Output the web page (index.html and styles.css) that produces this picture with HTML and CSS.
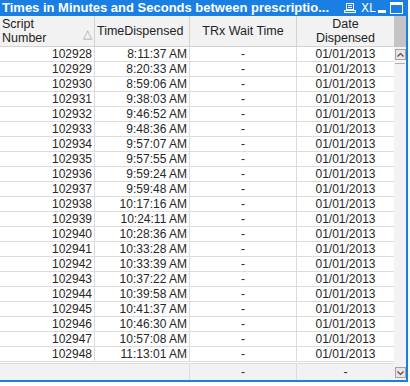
FILE: index.html
```html
<!DOCTYPE html>
<html>
<head>
<meta charset="utf-8">
<link rel="stylesheet" href="styles.css">
</head>
<body>
<div class="window">
  <div class="titlebar">
    <span class="title">Times in Minutes and Seconds between prescriptio...</span>
    <span class="tools">
      <svg class="ico print" width="12" height="12" viewBox="0 0 12 12"><rect x="2.5" y="1.5" width="7" height="6" fill="none" stroke="#fff"/><rect x="0.5" y="8.5" width="11" height="2" fill="none" stroke="#fff"/><line x1="4" y1="3.5" x2="8" y2="3.5" stroke="#fff"/><line x1="4" y1="5.5" x2="8" y2="5.5" stroke="#fff"/></svg>
      <span class="xl">XL</span>
      <svg class="ico min" width="10" height="12" viewBox="0 0 10 12"><rect x="1" y="8" width="8" height="3" fill="#fff"/></svg>
      <svg class="ico max" width="13" height="12" viewBox="0 0 13 12"><rect x="0.5" y="0.5" width="12" height="11" fill="none" stroke="#fff"/><rect x="1" y="1" width="11" height="2" fill="#fff"/></svg>
    </span>
  </div>
  <div class="body">
    <div class="table">
      <div class="head">
        <div class="hc c1"><span>Script<br>Number</span><span class="sort">&#9651;</span></div>
        <div class="hc c2">TimeDispensed</div>
        <div class="hc c3 center">TRx Wait Time</div>
        <div class="hc c4 center">Date<br>Dispensed</div>
      </div>
      <div class="rows" id="rows"></div>
      <div class="gap"></div>
      <div class="total">
        <div class="tc t12"></div>
        <div class="tc c3 center">-</div>
        <div class="tc c4 center">-</div>
      </div>
    </div>
    <div class="scroll">
      <div class="sc-head"></div>
      <div class="sc-track">
        <div class="btn"><svg width="9" height="8" viewBox="0 0 9 8"><polyline points="1.5,5.5 4.5,2.5 7.5,5.5" fill="none" stroke="#7a3a3a" stroke-width="1.2"/></svg></div>
        <div class="thumb"></div>
        <div class="fill"></div>
        <div class="btn"><svg width="9" height="8" viewBox="0 0 9 8"><polyline points="1.5,2.5 4.5,5.5 7.5,2.5" fill="none" stroke="#7a3a3a" stroke-width="1.2"/></svg></div>
      </div>
    </div>
  </div>
</div>
<script>
var data = [
["102928","8:11:37 AM"],["102929","8:20:33 AM"],["102930","8:59:06 AM"],["102931","9:38:03 AM"],
["102932","9:46:52 AM"],["102933","9:48:36 AM"],["102934","9:57:07 AM"],["102935","9:57:55 AM"],
["102936","9:59:24 AM"],["102937","9:59:48 AM"],["102938","10:17:16 AM"],["102939","10:24:11 AM"],
["102940","10:28:36 AM"],["102941","10:33:28 AM"],["102942","10:33:39 AM"],["102943","10:37:22 AM"],
["102944","10:39:58 AM"],["102945","10:41:37 AM"],["102946","10:46:30 AM"],["102947","10:57:08 AM"],
["102948","11:13:01 AM"]];
var html = "";
data.forEach(function(r){
  html += '<div class="row"><div class="c c1 right">'+r[0]+'</div><div class="c c2 right">'+r[1]+'</div><div class="c c3 center">-</div><div class="c c4 center">01/01/2013</div></div>';
});
document.getElementById("rows").innerHTML = html;
</script>
</body>
</html>
```
FILE: styles.css
```css
html, body { margin: 0; padding: 0; background: #fff; }
body { font-family: "Liberation Sans", Arial, sans-serif; font-size: 12px; color: #262626; }
.window {
  width: 406px;
  border-right: 2px solid #1a7fe3;
  border-bottom: 2px solid #1a7fe3;
}
.titlebar {
  height: 16px;
  background: #1a7fe3;
  color: #fff;
  display: flex;
  align-items: center;
}
.title { flex: 1; font-weight: bold; font-size: 13px; padding-left: 2px; white-space: nowrap; overflow: hidden; line-height: 16px; }
.tools { display: flex; align-items: center; padding-right: 3px; }
.print { margin-right: 5px; }
.xl { font-size: 13px; line-height: 12px; width: 12px; margin-right: 4px; font-family: "DejaVu Sans Condensed", "Liberation Sans Narrow", sans-serif; }
.min { margin-right: 3px; }
.ico { display: block; }
.body { display: flex; }
.table { width: 394px; }
.head {
  display: grid;
  grid-template-columns: 95px 95px 107px 97px;
  height: 30px;
  background: #f2f2f2;
  border-bottom: 1px solid #d2d2d2;
}
.hc {
  border-right: 1px solid #d2d2d2;
  padding: 0 2px;
  display: flex;
  align-items: center;
  line-height: 14px;
  font-size: 12.5px;
  color: #222;
}
.hc.center { justify-content: center; text-align: center; }
.hc.c1 { justify-content: space-between; }
.sort { color: #a8a8a8; font-size: 12px; align-self: flex-end; margin-bottom: 5px; }
.row {
  display: grid;
  grid-template-columns: 95px 95px 107px 97px;
  height: 14px;
  border-bottom: 1px solid #dcdcdc;
}
.c {
  border-right: 1px solid #dcdcdc;
  padding: 0 2px;
  line-height: 14px;
  white-space: nowrap;
}
.c4, .hc.c4 { border-right: none; }
.right { text-align: right; }
.center { text-align: center; }
.gap { height: 1px; border-bottom: 1px solid #dcdcdc; }
.total {
  display: grid;
  grid-template-columns: 190px 107px 97px;
  height: 16px;
  background: #f2f2f2;
}
.tc { border-right: 1px solid #dcdcdc; line-height: 16px; }
.tc.c4 { border-right: none; }
.scroll { width: 12px; display: flex; flex-direction: column; }
.sc-head { height: 31px; background: #c4c4c4; }
.sc-track { flex: 1; background: #f3f3f3; display: flex; flex-direction: column; align-items: center; padding: 2px 0 2px; }
.btn {
  width: 9px; height: 9px;
  border: 1px solid #a4a4a4;
  background: #e6e6e6;
  display: flex; align-items: center; justify-content: center;
}
.thumb { width: 10px; height: 1px; background: #b0b0b0; margin-top: 3px; }
.fill { flex: 1; }
```
